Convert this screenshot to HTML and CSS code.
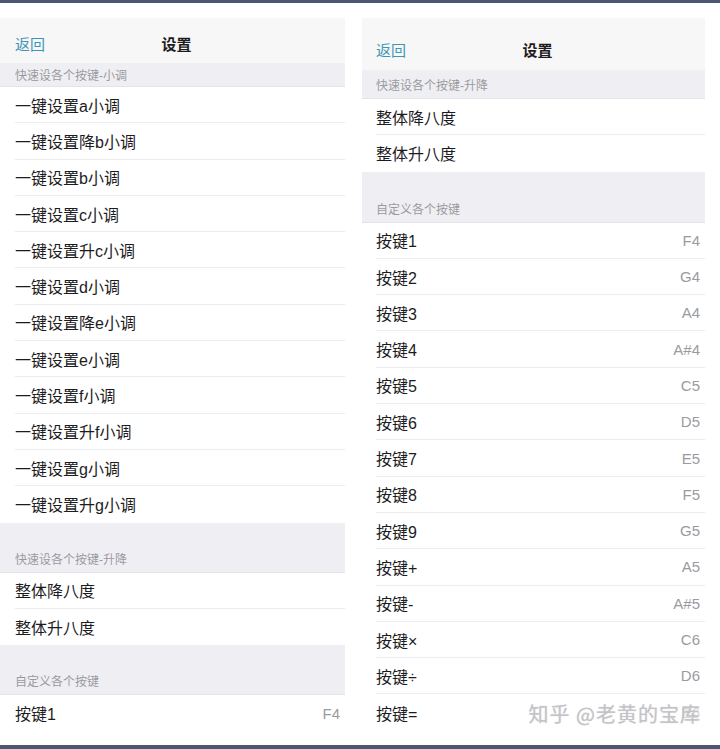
FILE: index.html
```html
<!DOCTYPE html>
<html>
  <head>
    <title>设置</title>
    <link rel="stylesheet" href="styles.css">
  </head>
  <body>
    <div class="frame">
      <!-- left screenshot -->
      <div class="screen screen-left">
        <div class="nav">
          <span class="back">返回</span>
          <span class="title">设置</span>
        </div>
        <div class="group-title first">快速设各个按键-小调</div>
        <div class="cell">一键设置a小调</div>
        <div class="cell">一键设置降b小调</div>
        <div class="cell">一键设置b小调</div>
        <div class="cell">一键设置c小调</div>
        <div class="cell">一键设置升c小调</div>
        <div class="cell">一键设置d小调</div>
        <div class="cell">一键设置降e小调</div>
        <div class="cell">一键设置e小调</div>
        <div class="cell">一键设置f小调</div>
        <div class="cell">一键设置升f小调</div>
        <div class="cell">一键设置g小调</div>
        <div class="cell last">一键设置升g小调</div>
        <div class="group-title">快速设各个按键-升降</div>
        <div class="cell">整体降八度</div>
        <div class="cell last">整体升八度</div>
        <div class="group-title">自定义各个按键</div>
        <div class="cell last">按键1<span class="value">F4</span></div>
      </div>

      <!-- right screenshot -->
      <div class="screen screen-right">
        <div class="nav">
          <span class="back">返回</span>
          <span class="title">设置</span>
        </div>
        <div class="group-title first">快速设各个按键-升降</div>
        <div class="cell">整体降八度</div>
        <div class="cell last">整体升八度</div>
        <div class="group-title">自定义各个按键</div>
        <div class="cell">按键1<span class="value">F4</span></div>
        <div class="cell">按键2<span class="value">G4</span></div>
        <div class="cell">按键3<span class="value">A4</span></div>
        <div class="cell">按键4<span class="value">A#4</span></div>
        <div class="cell">按键5<span class="value">C5</span></div>
        <div class="cell">按键6<span class="value">D5</span></div>
        <div class="cell">按键7<span class="value">E5</span></div>
        <div class="cell">按键8<span class="value">F5</span></div>
        <div class="cell">按键9<span class="value">G5</span></div>
        <div class="cell">按键+<span class="value">A5</span></div>
        <div class="cell">按键-<span class="value">A#5</span></div>
        <div class="cell">按键×<span class="value">C6</span></div>
        <div class="cell">按键÷<span class="value">D6</span></div>
        <div class="cell last">按键=<span class="value">E6</span></div>
      </div>
    </div>

    <div class="watermark">知乎 @老黄的宝库</div>
  </body>
</html>
```

FILE: styles.css
```css
body {
  margin: 0;
  padding: 0;
  width: 720px;
  height: 749px;
  overflow: hidden;
  position: relative;
  background-color: #fff;
  color: #1c1c1e;
  font-family: "Liberation Sans", "Noto Sans CJK SC", sans-serif;
  border-top: 3px solid #4b5674;
  border-bottom: 4px solid #4b5674;
  box-sizing: border-box;
}

.frame {
  display: flex;
  gap: 17px;
  padding-top: 15px;
}

.screen {
  width: 345px;
  overflow: hidden;
}

.screen-right {
  width: 343px;
}

.nav {
  height: 45px;
  background-color: #f7f7f8;
  box-sizing: border-box;
  display: flex;
  align-items: flex-end;
  position: relative;
  padding: 0 0 9px 15px;
  font-size: 15px;
}

.screen-right .nav {
  height: 52px;
  padding: 0 0 10px 14px;
}

.back {
  color: #3f96b4;
}

.title {
  position: absolute;
  left: 8px;
  right: 0;
  bottom: 9px;
  text-align: center;
  font-weight: bold;
  pointer-events: none;
}

.screen-right .title {
  bottom: 10px;
}

.group-title {
  height: 50px;
  background-color: #efeff3;
  box-sizing: border-box;
  padding: 0 15px 5px;
  display: flex;
  align-items: flex-end;
  font-size: 12px;
  color: #9a9a9e;
  border-bottom: 1px solid #e4e4e8;
}

.group-title.first {
  height: 24px;
  padding-bottom: 3px;
}

.screen-right .group-title {
  padding-left: 14px;
  height: 51px;
}

.screen-right .group-title.first {
  height: 29px;
  padding-bottom: 5px;
}

.cell {
  height: 36.3px;
  margin-left: 15px;
  padding-right: 5px;
  box-sizing: border-box;
  display: flex;
  align-items: center;
  justify-content: space-between;
  font-size: 16px;
  border-bottom: 1px solid #ececef;
}

.screen-right .cell {
  margin-left: 14px;
}

.cell.last {
  border-bottom: none;
}

.value {
  color: #9b9b9f;
  font-size: 15px;
}

.watermark {
  position: absolute;
  right: 19px;
  bottom: 17px;
  font-family: "Noto Sans CJK SC", sans-serif;
  font-size: 20px;
  letter-spacing: 1px;
  color: rgba(195, 195, 200, 0.9);
  text-shadow: 0 0 1px rgba(120, 120, 120, 0.4);
  background-color: rgba(255, 255, 255, 0.6);
}
```
